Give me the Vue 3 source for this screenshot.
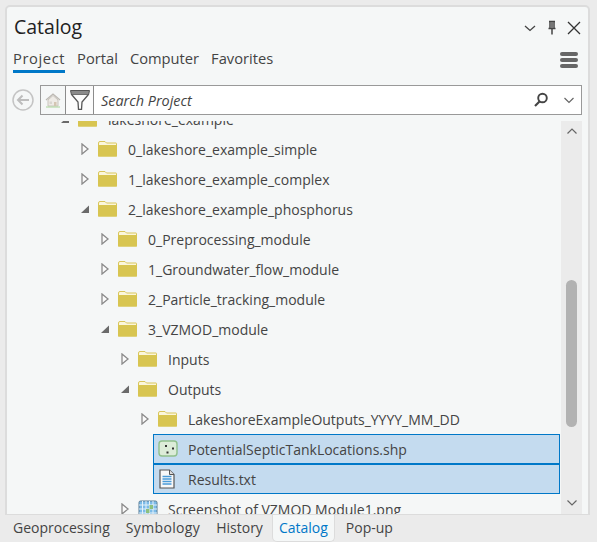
<script setup>
const rows = [
  { id: 'r0', label: 'lakeshore_example', level: 0, open: true, icon: 'folder' },
  { id: 'r1', label: '0_lakeshore_example_simple', level: 1, icon: 'folder' },
  { id: 'r2', label: '1_lakeshore_example_complex', level: 1, icon: 'folder' },
  { id: 'r3', label: '2_lakeshore_example_phosphorus', level: 1, open: true, icon: 'folder' },
  { id: 'r4', label: '0_Preprocessing_module', level: 2, icon: 'folder' },
  { id: 'r5', label: '1_Groundwater_flow_module', level: 2, icon: 'folder' },
  { id: 'r6', label: '2_Particle_tracking_module', level: 2, icon: 'folder' },
  { id: 'r7', label: '3_VZMOD_module', level: 2, open: true, icon: 'folder' },
  { id: 'r8', label: 'Inputs', level: 3, icon: 'folder' },
  { id: 'r9', label: 'Outputs', level: 3, open: true, icon: 'folder' },
  { id: 'r10', label: 'LakeshoreExampleOutputs_YYYY_MM_DD', level: 4, icon: 'folder' },
  { id: 'r11', label: 'PotentialSepticTankLocations.shp', level: 4, icon: 'shp', selected: true, leaf: true },
  { id: 'r12', label: 'Results.txt', level: 4, icon: 'txt', selected: true, leaf: true },
  { id: 'r13', label: 'Screenshot of VZMOD Module1.png', level: 3, icon: 'png' }
]
const topTabs = ['Project', 'Portal', 'Computer', 'Favorites']
const bottomTabs = ['Geoprocessing', 'Symbology', 'History', 'Catalog', 'Pop-up']
</script>

<template>
  <div class="page">
    <section class="panel">
      <header class="head">
        <h1 class="title">Catalog</h1>
        <div class="win">
          <svg width="14" height="14" viewBox="0 0 14 14"><path d="M2 5l5 4.500L12 5" fill="none" stroke="#444" stroke-width="1.300"/></svg>
          <svg width="12" height="16" viewBox="0 0 12 16"><path d="M3 1.500h6M4 1.500v7M8 1.500v7M2.500 8.500h7M6 8.500v6" fill="none" stroke="#444" stroke-width="1.500"/><rect x="4.500" y="2" width="3" height="6" fill="#777"/></svg>
          <svg width="14" height="14" viewBox="0 0 14 14"><path d="M1 1l12 12M13 1L1 13" fill="none" stroke="#333" stroke-width="1.300"/></svg>
        </div>
      </header>
      <nav class="tabs">
        <span v-for="(t, i) in topTabs" :key="t" class="tab" :class="{ on: i === 0 }">{{ t }}</span>
        <span class="menu"><i></i><i></i><i></i></span>
      </nav>
      <div class="tools">
        <svg class="back" width="22" height="22" viewBox="0 0 22 22"><circle cx="11" cy="11" r="10" fill="#f5f7f7" stroke="#c4c4c4" stroke-width="1.500"/><path d="M17 11H6M10.500 6.500L6 11l4.500 4.500" fill="none" stroke="#bdbdbd" stroke-width="2"/></svg>
        <div class="search">
          <span class="home">
            <svg width="16" height="16" viewBox="0 0 16 16"><path d="M3 8v6h10V8L8 3.500z" fill="#eeebe6" stroke="#c9c4bc"/><path d="M1 8l7-6 7 6" fill="none" stroke="#bcb8b2" stroke-width="1.300"/><rect x="9" y="10" width="2.500" height="4" fill="#d3c5b2"/><rect x="4.500" y="9.500" width="2.500" height="2.500" fill="#d9d6d0"/><path d="M1 15h14" stroke="#a9d498"/></svg>
          </span>
          <span class="filter">
            <svg width="20" height="20" viewBox="0 0 20 20"><path d="M.5.500h19L18.500 5h-17z" fill="#8a8a8a" stroke="#555"/><path d="M2 5l6 7 .5 7.500h3L12 12l6-7" fill="#fbfbfb" stroke="#555" stroke-width="1.300"/></svg>
          </span>
          <span class="ph">Search Project</span>
          <svg width="16" height="16" viewBox="0 0 16 16"><circle cx="9.500" cy="6" r="4.300" fill="none" stroke="#444" stroke-width="1.900"/><path d="M6.500 9.500L2 14" stroke="#444" stroke-width="2.100"/></svg>
          <svg class="drop" width="12" height="12" viewBox="0 0 12 12"><path d="M1.500 4l4.500 4.500L10.500 4" fill="none" stroke="#666" stroke-width="1.200"/></svg>
        </div>
      </div>
      <div class="body">
        <div class="tree">
          <div class="rows">
            <div v-for="r in rows" :key="r.id" class="row" :style="{ marginLeft: 48 + r.level * 20 + 'px' }">
              <span class="tw">
                <svg v-if="r.open" width="10" height="12" viewBox="0 0 10 12"><path d="M1 10L9 2.500V10z" fill="#6a6a6a"/></svg>
                <svg v-else-if="!r.leaf" width="10" height="12" viewBox="0 0 10 12"><path d="M2 1L8 6l-6 5z" fill="#fafafa" stroke="#8a8a8a" stroke-width="1.300"/></svg>
              </span>
              <span class="item" :class="{ sel: r.selected }">
                <span class="ic">
                  <svg v-if="r.icon === 'folder'" width="19" height="16" viewBox="0 0 19 16"><path d="M.5 2A1.500 1.500 0 0 1 2 .500h5L8.500 2H18a.5.500 0 0 1 .5.500V15H.5z" fill="#fbf6dc" stroke="#d9c65c"/><rect x="0" y="4" width="19" height="11.500" fill="#d8c551"/></svg>
                  <svg v-else-if="r.icon === 'shp'" width="20" height="18" viewBox="0 0 20 18"><rect x="1" y="1" width="18" height="15" rx="3" fill="#dcecd8" stroke="#90c08c" stroke-width="1.400"/><rect x="7" y="5" width="2" height="2" fill="#333"/><rect x="14" y="7.500" width="2" height="2" fill="#333"/><rect x="8.500" y="11.500" width="2" height="2" fill="#333"/></svg>
                  <svg v-else-if="r.icon === 'txt'" width="18" height="20" viewBox="0 0 18 20"><path d="M2 1h9.500L16 5.500V19H2z" fill="#f8f8f8" stroke="#555" stroke-width="1.200"/><path d="M11.500 1v4.500H16" fill="#ddd" stroke="#555"/><path d="M4.500 7.500h9M4.500 10h9M4.500 12.500h9M4.500 15h9" stroke="#4a9bd8" stroke-width="1.400"/></svg>
                  <svg v-else width="20" height="18" viewBox="0 0 20 18"><rect x="1" y="1" width="18" height="16" rx="1.500" fill="#7cbbe8" stroke="#5a7d95"/><path d="M4.500 1v16M8 1v16M11.500 1v16M15 1v16M1 5h18M1 9h18M1 13h18" stroke="#e4f1fa"/><rect x="8" y="9" width="3.500" height="4" fill="#8dc07f"/><rect x="11.500" y="5" width="3.500" height="4" fill="#8dc07f"/></svg>
                </span>
                <span class="lbl">{{ r.label }}</span>
              </span>
            </div>
          </div>
        </div>
        <aside class="bar">
          <svg width="12" height="8" viewBox="0 0 12 8"><path d="M1.500 6.500L6 2l4.500 4.500" fill="none" stroke="#666" stroke-width="1.200"/></svg>
          <span class="track"><i class="thumb"></i></span>
          <svg width="12" height="8" viewBox="0 0 12 8"><path d="M1.500 1.500L6 6l4.500-4.500" fill="none" stroke="#666" stroke-width="1.200"/></svg>
        </aside>
      </div>
    </section>
    <footer class="foot">
      <span v-for="t in bottomTabs" :key="t" class="ft" :class="{ on: t === 'Catalog', wide: t === 'Symbology' }">{{ t }}</span>
    </footer>
  </div>
</template>

<style scoped>
.page {
  width: 597px;
  height: 542px;
  box-sizing: border-box;
  padding: 5px 7px 0 5px;
  background: #ebebeb;
  font-family: "Open Sans", "Noto Sans", sans-serif;
  color: #333;
  overflow: hidden;
  display: flex;
  flex-direction: column;
}
.panel {
  height: 510px;
  box-sizing: border-box;
  border: 2px solid #dcdcdc;
  border-bottom-width: 1px;
  border-top-left-radius: 5px;
  border-top-right-radius: 5px;
  background: #f5f7f7;
  display: flex;
  flex-direction: column;
  padding-right: 6px;
}
.head {
  height: 33px;
  padding: 0 0 0 7px;
  display: flex;
  align-items: center;
  justify-content: space-between;
  flex: none;
}
.title {
  margin: 6px 0 0;
  font-size: 19.500px;
  font-weight: 400;
  color: #222;
}
.win {
  display: flex;
  align-items: center;
  gap: 9px;
  margin: 8px 1px 0 0;
}
.tabs {
  height: 45px;
  padding-left: 6px;
  display: flex;
  align-items: flex-start;
  gap: 12px;
  flex: none;
}
.tab {
  height: 33px;
  box-sizing: border-box;
  border-bottom: 3px solid transparent;
  font-size: 14.700px;
  line-height: 36px;
  color: #444;
}
.tab.on {
  border-color: #0078c8;
  letter-spacing: 0.600px;
}
.menu {
  margin-left: auto;
  margin-right: 4px;
  margin-top: 12px;
  width: 18px;
  display: flex;
  flex-direction: column;
  gap: 2px;
}
.menu i {
  height: 4px;
  border-radius: 2px;
  background: #666;
}
.tools {
  height: 30px;
  display: flex;
  align-items: center;
  flex: none;
  padding: 0 0 0 5px;
  margin-bottom: 6px;
}
.back {
  flex: none;
  margin-right: 6px;
}
.search {
  flex: 1;
  height: 30px;
  box-sizing: border-box;
  border: 1px solid #999;
  background: #fff;
  display: flex;
  align-items: center;
}
.home {
  width: 24px;
  height: 100%;
  background: #f5f7f7;
  display: flex;
  align-items: center;
  justify-content: center;
  flex: none;
}
.filter {
  width: 29px;
  height: 100%;
  box-sizing: border-box;
  border: 1px solid #8c8c8c;
  border-width: 0 1px;
  display: flex;
  align-items: center;
  justify-content: center;
  flex: none;
  background: #fbfbfb;
}
.ph {
  flex: 1;
  padding-left: 7px;
  font-size: 14.400px;
  font-style: italic;
  color: #444;
}
.drop {
  margin: 0 6px 0 14px;
}
.body {
  flex: 1;
  min-height: 0;
  display: flex;
}
.tree {
  flex: 1;
  min-width: 0;
  overflow: hidden;
}
.rows {
  margin-top: -17px;
}
.row {
  height: 30px;
  display: flex;
  align-items: center;
  margin-right: 1px;
  white-space: nowrap;
}
.tw {
  width: 20px;
  display: flex;
  justify-content: center;
  flex: none;
}
.item {
  flex: 1;
  min-width: 0;
  height: 30px;
  box-sizing: border-box;
  margin-left: -2px;
  padding-left: 4px;
  border: 1px solid transparent;
  display: flex;
  align-items: center;
}
.item.sel {
  background: #c4dbef;
  border-color: #0078c8;
}
.ic {
  width: 20px;
  display: flex;
  justify-content: flex-start;
  flex: none;
  margin-right: 10px;
}
.lbl {
  font-size: 14px;
  color: #444;
  padding-top: 1px;
}
.bar {
  width: 21px;
  background: #ebebeb;
  display: flex;
  flex-direction: column;
  align-items: center;
  padding: 6px 0 7px;
  box-sizing: border-box;
  flex: none;
}
.track {
  flex: 1;
  width: 100%;
  display: block;
  padding-top: 145px;
  box-sizing: border-box;
}
.thumb {
  display: block;
  width: 11px;
  height: 147px;
  margin: 0 auto;
  border-radius: 6px;
  background: #b2b2b2;
}
.foot {
  height: 27px;
  flex: none;
  display: flex;
  padding-left: 8px;
  gap: 16px;
  align-items: flex-start;
}
.ft {
  font-size: 14px;
  line-height: 26px;
  color: #444;
}
.ft.wide {
  letter-spacing: 0.350px;
}
.ft.on {
  color: #0078c8;
  background: #f5f7f7;
  border: 1px solid #dcdcdc;
  border-top: 0;
  border-radius: 0 0 5px 5px;
  padding: 0 6px;
  margin: 0 -5px 0 -7px;
}
</style>
